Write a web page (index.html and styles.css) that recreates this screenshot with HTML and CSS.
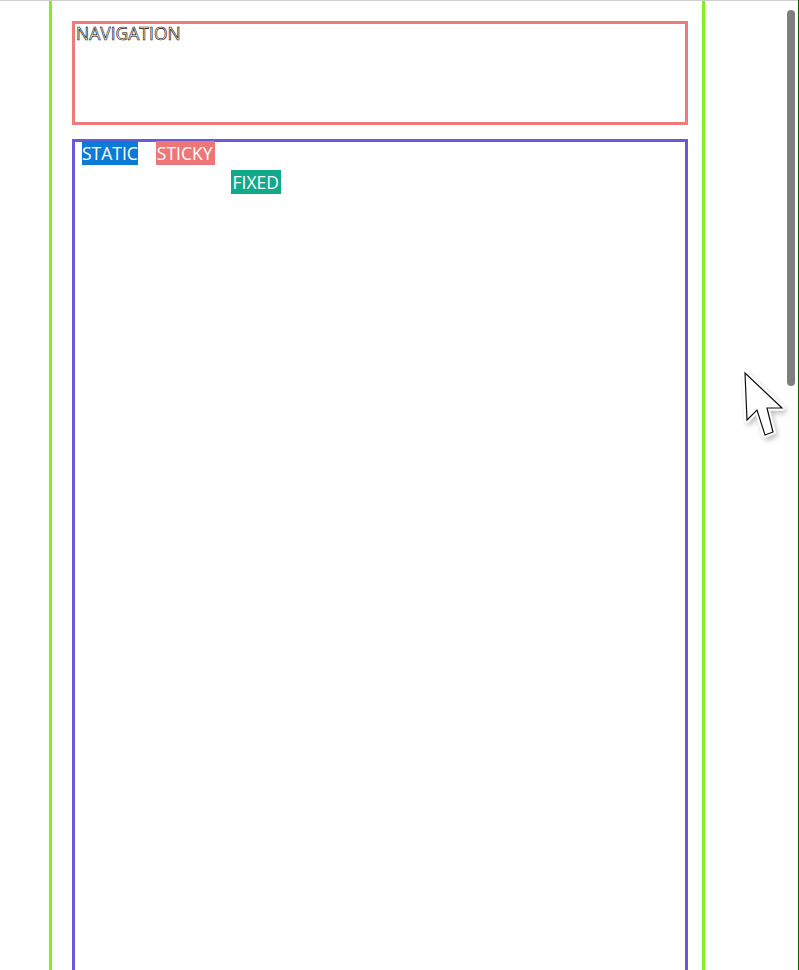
FILE: index.html
```html
<!DOCTYPE html>
<html lang="en">
<head>
<meta charset="utf-8">
<title>Positioning</title>
<link rel="stylesheet" href="styles.css">
</head>
<body>
<div class="page">
  <nav class="nav"><span class="nav-label">NAVIGATION</span></nav>
  <main class="content">
    <div class="badges">
      <span class="badge badge-static">STATIC</span>
      <span class="badge badge-sticky">STICKY</span>
      <span class="badge badge-fixed">FIXED</span>
    </div>
  </main>
</div>
<div class="scrollbar"></div>
<div class="edge"></div>
<svg class="cursor" width="56" height="80" viewBox="0 0 56 80">
  <defs>
    <filter id="sh" x="-30%" y="-30%" width="160%" height="160%">
      <feDropShadow dx="2" dy="3" stdDeviation="2.5" flood-color="#000" flood-opacity="0.25"/>
    </filter>
  </defs>
  <polygon points="5,5 7,52 17,42 25,67 33,64 27,40 42,40" fill="#fff" stroke="#fff" stroke-width="5" stroke-linejoin="round" filter="url(#sh)"/>
  <polygon points="5,5 7,52 17,42 25,67 33,64 27,40 42,40" fill="#fff" stroke="#111" stroke-width="1.2" stroke-linejoin="miter"/>
</svg>
</body>
</html>
```
FILE: styles.css
```css
html, body {
  margin: 0;
  padding: 0;
  height: 100%;
  overflow: hidden;
  background: #fff;
}
body {
  border-top: 1px solid #cfcfcf;
  font-family: "Open Sans", "Noto Sans", sans-serif;
  box-sizing: border-box;
}
.page {
  margin-left: 49px;
  width: 656px;
  box-sizing: border-box;
  min-height: 1100px;
  border-left: 3px solid #80f020;
  border-right: 3px solid #80f020;
  padding: 20px 14px 0 20px;
}
.nav {
  height: 104px;
  box-sizing: border-box;
  border: 3px solid #ee7b7b;
  padding-left: 1px;
}
.nav-label {
  display: block;
  font-size: 17.5px;
  line-height: 16px;
  padding-top: 1px;
  color: #fff;
  -webkit-text-stroke: 0.6px #000;
}
.content {
  margin-top: 14px;
  height: 1000px;
  box-sizing: border-box;
  border: 3px solid #6a5ad8;
  border-bottom: none;
}
.badges {
  display: flex;
  align-items: flex-start;
  padding-left: 7px;
  margin-top: -1px;
}
.badge {
  color: #fff;
  font-size: 17.5px;
  line-height: 24px;
  height: 24px;
}
.badge-static { background: #0b7bd8; }
.badge-sticky { background: #ef7676; margin-left: 18px; padding: 0 2px 0 1px; }
.badge-fixed { background: #12a88a; margin-left: 16px; margin-top: 29px; padding: 0 2px; }
.scrollbar {
  position: fixed;
  left: 787px;
  top: 10px;
  width: 8px;
  height: 376px;
  border-radius: 4px;
  background: #7f7f7f;
}
.edge {
  position: fixed;
  right: 0;
  top: 0;
  width: 1px;
  height: 100%;
  background: #0a5a0a;
}
.cursor {
  position: fixed;
  left: 740px;
  top: 368px;
}
```
